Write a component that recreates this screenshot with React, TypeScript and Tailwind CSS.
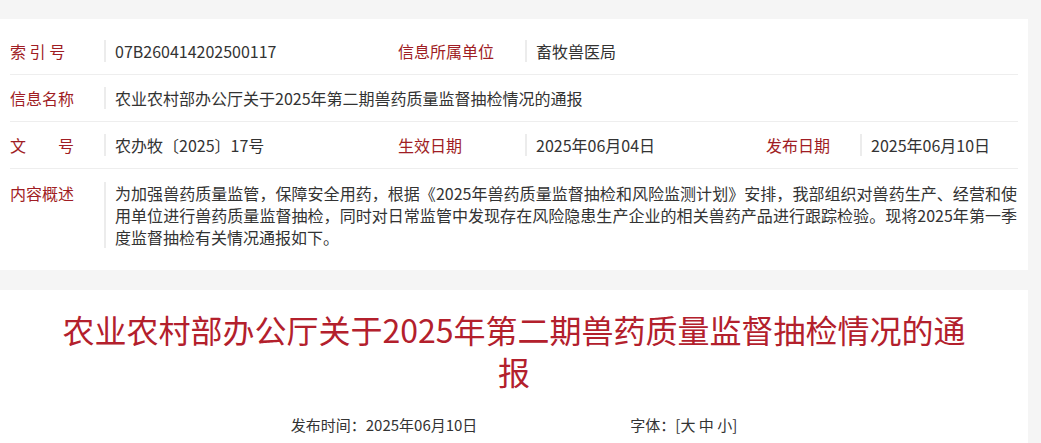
// Página de detalle de un documento oficial: tabla de metadatos y título
const etiqueta = "text-[#a01d24] shrink-0";
const valor = "border-l-2 border-[#ececec] pl-[9px] text-[#333333]";

const App = () => {
    return (
        <div
            className="min-h-[443px] bg-[#f5f5f5] pt-[19px] text-[16px]"
            style={{ fontFamily: '"Noto Sans CJK SC", "Noto Sans", sans-serif' }}
        >
            {/* Tarjeta con la tabla de información */}
            <div className="w-[1028px] bg-white px-[10px] pt-[9px]">
                <div className="flex h-[47px] items-center border-b border-[#eeeeee]">
                    <div className={`${etiqueta} w-[94px]`}>索 引 号</div>
                    <div className={`${valor} w-[294px] leading-[22px]`}>07B260414202500117</div>
                    <div className={`${etiqueta} w-[127px]`}>信息所属单位</div>
                    <div className={`${valor} flex-1 leading-[22px]`}>畜牧兽医局</div>
                </div>
                <div className="flex h-[47px] items-center border-b border-[#eeeeee]">
                    <div className={`${etiqueta} w-[94px]`}>信息名称</div>
                    <div className={`${valor} flex-1 leading-[22px]`}>
                        农业农村部办公厅关于2025年第二期兽药质量监督抽检情况的通报
                    </div>
                </div>
                <div className="flex h-[47px] items-center border-b border-[#eeeeee]">
                    <div className={`${etiqueta} w-[94px]`}>文　　号</div>
                    <div className={`${valor} w-[294px] leading-[22px]`}>农办牧〔2025〕17号</div>
                    <div className={`${etiqueta} w-[127px]`}>生效日期</div>
                    <div className={`${valor} w-[241px] leading-[22px]`}>2025年06月04日</div>
                    <div className={`${etiqueta} w-[94px]`}>发布日期</div>
                    <div className={`${valor} flex-1 leading-[22px]`}>2025年06月10日</div>
                </div>
                <div className="flex items-start pt-[13px] pb-[22px]">
                    <div className={`${etiqueta} w-[94px] leading-[22px]`}>内容概述</div>
                    <div className={`${valor} w-[913px] leading-[22px]`}>
                        <span className="block text-justify [text-align-last:justify]">
                            为加强兽药质量监管，保障安全用药，根据《2025年兽药质量监督抽检和风险监测计划》安排，我部组织对兽药生产、经营和使
                        </span>
                        <span className="block text-justify [text-align-last:justify]">
                            用单位进行兽药质量监督抽检，同时对日常监管中发现存在风险隐患生产企业的相关兽药产品进行跟踪检验。现将2025年第一季
                        </span>
                        <span className="block">度监督抽检有关情况通报如下。</span>
                    </div>
                </div>
            </div>

            {/* Tarjeta con el título del documento */}
            <div className="mt-[20px] w-[1028px] bg-white px-[56px] pt-[18px] pb-[10px]">
                <h1 className="text-center text-[32px] leading-[42px] font-normal text-[#b3202c]">
                    农业农村部办公厅关于2025年第二期兽药质量监督抽检情况的通报
                </h1>
                <div className="mt-[21px] flex justify-center gap-[153px] text-[15px] leading-[24px] text-[#333333]">
                    <span>发布时间：2025年06月10日</span>
                    <span>字体：[大 中 小]</span>
                </div>
            </div>
        </div>
    );
};

export default App;
